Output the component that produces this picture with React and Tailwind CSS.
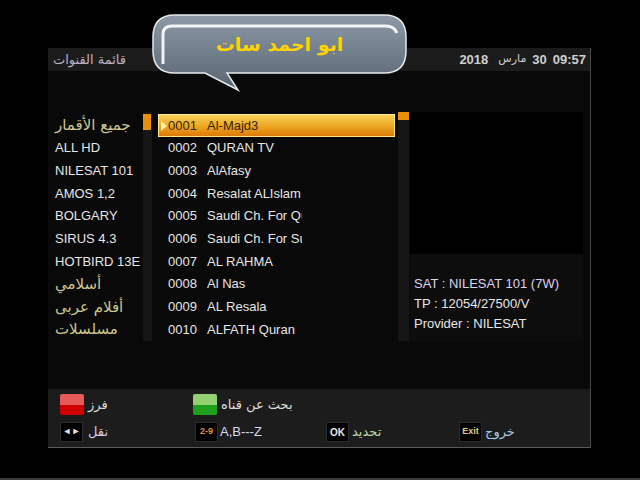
import React from 'react';

const latin = { fontFamily: '"Liberation Sans", Arial, sans-serif' };

const satellites = [
  { name: 'جميع الأقمار', ar: true },
  { name: 'ALL HD' },
  { name: 'NILESAT 101' },
  { name: 'AMOS 1,2' },
  { name: 'BOLGARY' },
  { name: 'SIRUS 4.3' },
  { name: 'HOTBIRD 13E' },
  { name: 'أسلامي', ar: true },
  { name: 'أفلام عربى', ar: true },
  { name: 'مسلسلات', ar: true },
];

const channels = [
  ['0001', 'Al-Majd3'],
  ['0002', 'QURAN TV'],
  ['0003', 'AlAfasy'],
  ['0004', 'Resalat ALIslam'],
  ['0005', 'Saudi Ch. For Quran'],
  ['0006', 'Saudi Ch. For Sunna'],
  ['0007', 'AL RAHMA'],
  ['0008', 'Al Nas'],
  ['0009', 'AL Resala'],
  ['0010', 'ALFATH Quran'],
];

const Arabic = ({ children, className = '' }) => (
  <span dir="rtl" className={`font-['DejaVu_Sans',sans-serif] ${className}`}>
    {children}
  </span>
);

const KeyBox = ({ children, className = '' }) => (
  <div className={`w-[23px] h-[20px] bg-black border border-[#2c2c2c] flex items-center justify-center text-[9px] font-bold ${className}`}>
    {children}
  </div>
);

const Bubble = () => (
  <div className="absolute left-[150px] top-[12px] w-[260px] h-[82px]">
    <svg width="260" height="82" viewBox="0 0 260 82" className="absolute inset-0">
      <defs>
        <linearGradient id="bub" x1="0" y1="0" x2="0" y2="1">
          <stop offset="0" stopColor="#8d99a6" />
          <stop offset="0.5" stopColor="#717e8c" />
          <stop offset="1" stopColor="#5a6572" />
        </linearGradient>
      </defs>
      <path
        d="M25 3 H234 Q256 3 256 25 V39 Q256 61 234 61 H77 L88 78 L55 61 H25 Q3 61 3 39 V25 Q3 3 25 3 Z"
        fill="url(#bub)"
        stroke="#e4eaf0"
        strokeWidth="1.5"
      />
      <path d="M13 52 V22 Q13 14 22 14 H236 Q244 14 247 21" fill="none" stroke="#ffffff" strokeWidth="3" opacity="0.9" />
    </svg>
    <div className="absolute left-[3px] top-[3px] w-[253px] h-[58px] flex items-center justify-center">
      <Arabic className="text-[19px] font-bold text-[#ffd200]">ابو احمد سات</Arabic>
    </div>
  </div>
);

export default function App() {
  return (
    <div className="relative w-[640px] h-[480px] bg-black overflow-hidden text-[#e6e6e6]" style={latin}>
      <div className="pt-[48px] pl-[48px]">
        <div className="w-[543px] border-r border-[#4a4a4a]">
          {/* Header */}
          <div className="h-[23px] bg-[#1b1b1b] flex items-center justify-between pl-[5px] pr-[4px]">
            <Arabic className="text-[13px] text-[#b9b2c4]">قائمة القنوات</Arabic>
            <div className="flex items-center text-[13px] font-bold text-[#cfcfcf]">
              <span>2018</span>
              <Arabic className="ml-[10px] text-[11px] font-normal">مارس</Arabic>
              <span className="ml-[6px]">30</span>
              <span className="ml-[6px]">09:57</span>
            </div>
          </div>

          {/* Body */}
          <div className="h-[318px] bg-[#090909] pt-[43px]">
            <div className="flex items-start">
              <div className="w-[95px] pl-[7px]">
                {satellites.map((s) => (
                  <div key={s.name} className="h-[22.7px] flex items-center whitespace-nowrap">
                    {s.ar ? (
                      <Arabic className="text-[15px] text-[#cdc58e]">{s.name}</Arabic>
                    ) : (
                      <span className="text-[13px]">{s.name}</span>
                    )}
                  </div>
                ))}
              </div>
              <div className="w-[9px] h-[229px] bg-[#161616] -mt-[2px]">
                <div className="h-[16px] w-[8px] mt-[2px] bg-[#e8900c]" />
              </div>
              <div className="w-[237px] ml-[6px]">
                {channels.map(([num, name], i) => (
                  <div
                    key={num}
                    className={`h-[22.7px] flex items-center text-[13px] relative ${
                      i === 0
                        ? 'bg-[linear-gradient(#f7d25a,#eca520_55%,#dc7a08)] border border-[#ffe48a] text-[#3a1e00]'
                        : ''
                    }`}
                  >
                    {i === 0 && (
                      <span className="absolute left-[2px] top-[6px] w-0 h-0 border-y-[5px] border-y-transparent border-l-[6px] border-l-[#fff2b0]" />
                    )}
                    <span className={`${i === 0 ? 'w-[48px] pl-[9px]' : 'w-[49px] pl-[10px]'}`}>{num}</span>
                    <span className="w-[95px] overflow-hidden whitespace-nowrap">{name}</span>
                  </div>
                ))}
              </div>
              <div className="w-[11px] h-[229px] bg-[#161616] ml-[3px] -mt-[2px]">
                <div className="h-[8px] w-[11px] bg-[#e8900c]" />
              </div>
              <div className="w-[173px] ml-[1px] h-[229px] bg-[#0d0d0d] -mt-[2px]">
                <div className="h-[142px] bg-black" />
                <div className="pl-[4px] pt-[20px] text-[13px] leading-[20px]">
                  <div className="text-[#d8d4f0]">SAT : NILESAT 101 (7W)</div>
                  <div>TP : 12054/27500/V</div>
                  <div>Provider : NILESAT</div>
                </div>
              </div>
            </div>
          </div>

          {/* Footer */}
          <div className="h-[59px] bg-[#1c1c1c] border-b border-[#5a5a5a] pl-[12px] pt-[5px]">
            <div className="grid grid-cols-[133px_133px_133px_133px] h-[21px]">
              <div className="flex items-center gap-[4px]">
                <div className="w-[24px] h-[21px] rounded-[2px] bg-[linear-gradient(#e65a5a_0%,#e65a5a_50%,#d00000_50%,#d00000_100%)]" />
                <Arabic className="text-[13px] text-[#dcdcdc]">فرز</Arabic>
              </div>
              <div className="flex items-center gap-[4px]">
                <div className="w-[24px] h-[21px] rounded-[2px] bg-[linear-gradient(#92d072_0%,#92d072_50%,#1ea01e_50%,#1ea01e_100%)]" />
                <Arabic className="text-[13px] text-[#dcdcdc]">بحث عن قناه</Arabic>
              </div>
              <div />
              <div />
            </div>
            <div className="grid grid-cols-[133px_133px_133px_133px] h-[20px] mt-[7px]">
              <div className="flex items-center gap-[5px]">
                <KeyBox className="text-[#e0e0e0] text-[7px]">◄►</KeyBox>
                <Arabic className="text-[13px] text-[#d0d0e0]">نقل</Arabic>
              </div>
              <div className="flex items-center gap-[2px] pl-[2px]">
                <KeyBox className="text-[#e09040]">2-9</KeyBox>
                <span className="text-[13px] text-[#d8dcf0]">A,B---Z</span>
              </div>
              <div className="flex items-center gap-[3px]">
                <KeyBox className="text-[#e8e8e8] text-[10px]">OK</KeyBox>
                <Arabic className="text-[13px] text-[#b8d8a8]">تحديد</Arabic>
              </div>
              <div className="flex items-center gap-[3px]">
                <KeyBox className="text-[#d8c890] text-[8px]">Exit</KeyBox>
                <Arabic className="text-[13px] text-[#a8c8e8]">خروج</Arabic>
              </div>
            </div>
          </div>
        </div>
      </div>
      <div className="absolute left-0 right-0 bottom-0 h-[2px] bg-[#3a3a3a]" />
      <Bubble />
    </div>
  );
}
